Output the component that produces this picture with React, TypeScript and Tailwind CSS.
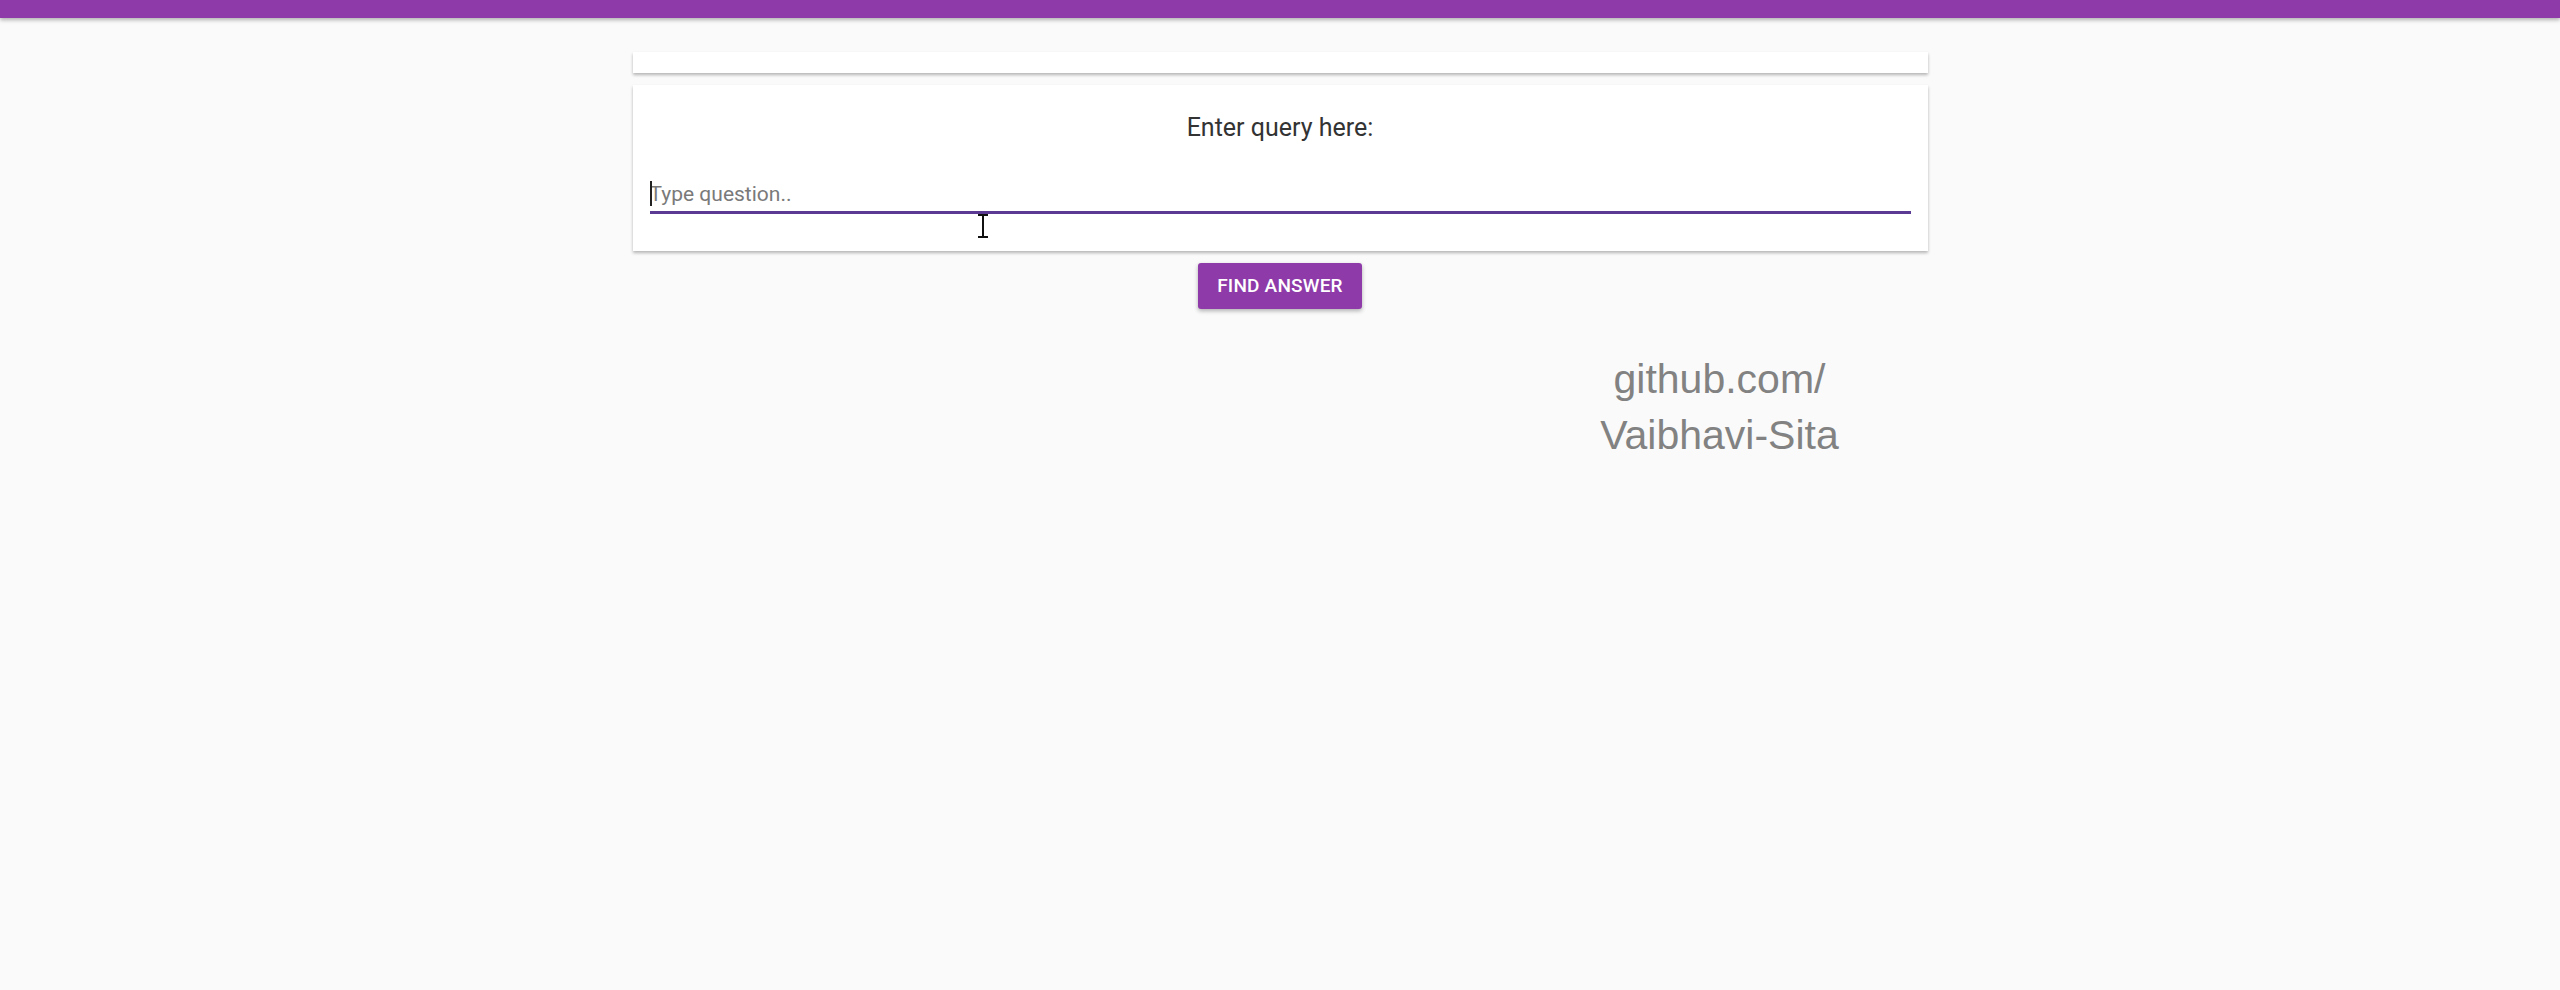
import { useState } from "react";

const ROBOTO = "font-['Roboto','Liberation_Sans',sans-serif]";

function IBeam() {
  return (
    <svg width="12" height="24" viewBox="0 0 12 24" className="absolute left-[977px] top-[214px] pointer-events-none">
      <path d="M1 1h10M6 1v22M1 23h10" stroke="#111" strokeWidth="2" fill="none" />
    </svg>
  );
}

export default function App() {
  const [q, setQ] = useState("");

  return (
    <div className={`relative min-h-[990px] bg-[#fafafa] ${ROBOTO}`}>
      <header className="h-[18px] bg-[#8e3aa9] shadow-[0_2px_4px_rgba(0,0,0,0.3)]" />

      <div className="w-[1295px] mx-auto mt-[34px]">
        <div className="h-[21px] bg-white shadow-[0_2px_3px_rgba(0,0,0,0.28)]" />

        <div className="mt-[12px] h-[166px] bg-white shadow-[0_2px_3px_rgba(0,0,0,0.28)] px-[17px] pt-[28px]">
          <p className="text-center text-[25px] leading-[30px] text-[#333]">Enter query here:</p>
          <div className="relative mt-[38px]">
            <span className="absolute left-0 top-[0px] w-[2px] h-[25px] bg-[#222]" />
            <input
              value={q}
              onChange={(e) => setQ(e.target.value)}
              placeholder="Type question.."
              className="w-full h-[33px] bg-transparent outline-none border-b-[3px] border-[#5a3a92] text-[21px] text-[#333] placeholder:text-[#7a7a7a] pb-[4px]"
            />
          </div>
        </div>

        <div className="flex justify-center mt-[12px]">
          <button
            type="button"
            className="w-[164px] h-[46px] rounded-[3px] bg-[#8e3aa9] text-white text-[19px] font-medium tracking-[0.01em] shadow-[0_2px_4px_rgba(0,0,0,0.3)]"
          >
            FIND ANSWER
          </button>
        </div>

        <div className="ml-[937px] w-[300px] mt-[42px] text-center font-['Liberation_Sans',Arial,sans-serif] text-[41px] leading-[56px] text-[#828282]">
          <div>github.com/</div>
          <div>Vaibhavi-Sita</div>
        </div>
      </div>

      <IBeam />
    </div>
  );
}
